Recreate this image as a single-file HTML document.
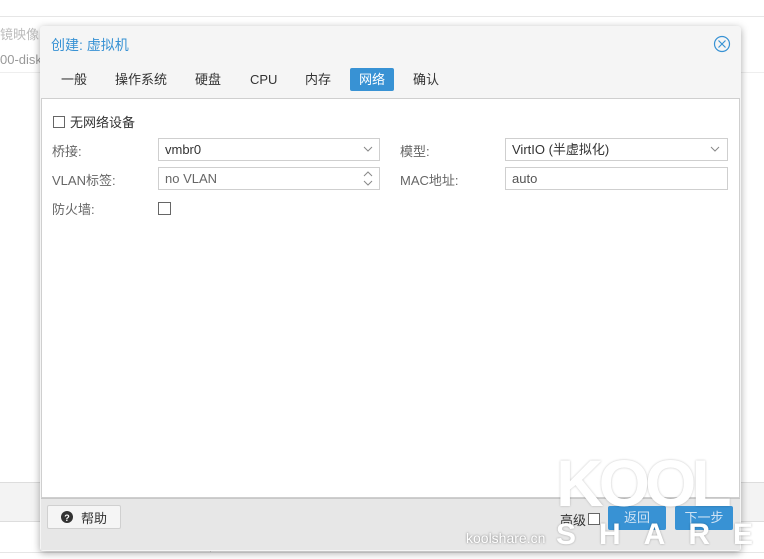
<!DOCTYPE html>
<html><head><meta charset="utf-8"><style>
*{box-sizing:border-box;margin:0;padding:0}
body{width:764px;height:559px;background:#fff;position:relative;overflow:hidden;font-family:"Liberation Sans","Noto Sans CJK SC",sans-serif;font-size:13px;color:#333}
.a{position:absolute}
.inp{position:absolute;height:23px;border:1px solid #cfcfcf;background:#fff;padding-left:6px;line-height:21px;font-size:13px}
.lbl{position:absolute;color:#666;font-size:13px}
.tab{position:absolute;top:68px;height:23px;line-height:23px;font-size:13px;color:#333}
.cb{position:absolute;width:12px;height:12px;border:1px solid #666;background:#fff}
</style></head><body>
<div class="a" style="left:0;top:16px;width:764px;height:1px;background:#e6e6e6"></div>
<div class="a" style="left:0;top:24px;color:#bbb;font-size:13px">镜映像 (</div>
<div class="a" style="left:0;top:52px;color:#999;font-size:13px">00-disk</div>
<div class="a" style="left:0;top:72px;width:764px;height:1px;background:#eee"></div>
<div class="a" style="left:0;top:482px;width:764px;height:40px;background:#f3f3f3;border-top:1px solid #ddd;border-bottom:1px solid #ddd"></div>
<div class="a" style="left:72px;top:530px;color:#bbb">用户名</div>
<div class="a" style="left:222px;top:530px;color:#bbb">描述</div>
<div class="a" style="left:210px;top:522px;width:1px;height:30px;background:#ddd"></div>
<div class="a" style="left:0;top:552px;width:764px;height:1px;background:#e6e6e6"></div>

<div class="a" style="left:40px;top:26px;width:701px;height:525px;background:#f5f5f5;box-shadow:0 2px 8px rgba(0,0,0,.35);border-radius:3px"></div>
<div class="a" style="left:51px;top:35px;font-size:14px;color:#3892d4">创建: 虚拟机</div>
<svg class="a" style="left:713px;top:35px" width="18" height="18"><circle cx="9" cy="9" r="7.5" fill="none" stroke="#3892d4" stroke-width="1.2"/><path d="M5.5 5.5L12.5 12.5M12.5 5.5L5.5 12.5" stroke="#3892d4" stroke-width="1.2"/></svg>
<div class="tab" style="left:61px">一般</div>
<div class="tab" style="left:115px">操作系统</div>
<div class="tab" style="left:195px">硬盘</div>
<div class="tab" style="left:250px">CPU</div>
<div class="tab" style="left:305px">内存</div>
<div class="tab" style="left:350px;width:44px;background:#3892d4;color:#fff;text-align:center;border-radius:2px">网络</div>
<div class="tab" style="left:413px">确认</div>

<div class="a" style="left:41px;top:98px;width:699px;height:400px;background:#fff;border:1px solid #cfcfcf"></div>
<div class="cb" style="left:53px;top:116px"></div>
<div class="a" style="left:70px;top:112px">无网络设备</div>
<div class="lbl" style="left:52px;top:141px">桥接:</div>
<div class="inp" style="left:158px;top:138px;width:222px">vmbr0</div>
<svg class="a" style="left:363px;top:146px" width="10" height="6"><path d="M1 1L5 5L9 1" fill="none" stroke="#888"/></svg>
<div class="lbl" style="left:400px;top:141px">模型:</div>
<div class="inp" style="left:505px;top:138px;width:223px">VirtIO (半虚拟化)</div>
<svg class="a" style="left:710px;top:146px" width="10" height="6"><path d="M1 1L5 5L9 1" fill="none" stroke="#888"/></svg>
<div class="lbl" style="left:52px;top:170px">VLAN标签:</div>
<div class="inp" style="left:158px;top:167px;width:222px;color:#666">no VLAN</div>
<svg class="a" style="left:363px;top:170px" width="10" height="17"><path d="M1 6L5 2L9 6M1 11L5 15L9 11" fill="none" stroke="#888"/></svg>
<div class="lbl" style="left:400px;top:170px">MAC地址:</div>
<div class="inp" style="left:505px;top:167px;width:223px;color:#555">auto</div>
<div class="lbl" style="left:52px;top:199px">防火墙:</div>
<div class="cb" style="left:158px;top:202px;width:13px;height:13px"></div>

<div class="a" style="left:41px;top:498px;width:699px;height:52px;background:#e7e7e7;border-top:1px solid #c8c8c8"></div>
<div class="a" style="left:47px;top:505px;width:74px;height:24px;background:#f5f5f5;border:1px solid #d0d0d0;border-radius:2px"></div>
<svg class="a" style="left:61px;top:511px" width="12" height="12"><circle cx="6" cy="6" r="6" fill="#333"/><text x="6" y="10" font-size="9" font-weight="bold" fill="#fff" text-anchor="middle" font-family="Liberation Sans">?</text></svg>
<div class="a" style="left:81px;top:508px;color:#333">帮助</div>
<div class="a" style="left:560px;top:510px;color:#333">高级</div>
<div class="cb" style="left:588px;top:513px"></div>
<div class="a" style="left:608px;top:506px;width:58px;height:24px;background:#3892d4;border-radius:2px;color:#cfe3f4;text-align:center;line-height:24px">返回</div>
<div class="a" style="left:675px;top:506px;width:58px;height:24px;background:#3892d4;border-radius:2px;color:#cfe3f4;text-align:center;line-height:24px">下一步</div>

<div class="a" style="left:556px;top:450px;font-size:66px;font-weight:bold;color:#fff;letter-spacing:-5px;line-height:66px;text-shadow:0 0 2px rgba(0,0,0,.25)">KOOL</div>
<div class="a" style="left:466px;top:530px;font-size:14px;color:#fff;text-shadow:0 0 2px rgba(0,0,0,.5)">koolshare.cn</div>
<div class="a" style="left:556px;top:518px;font-size:30px;font-weight:bold;color:#fff;letter-spacing:23px;text-shadow:0 0 2px rgba(0,0,0,.3);white-space:nowrap">SHARE</div>
</body></html>
